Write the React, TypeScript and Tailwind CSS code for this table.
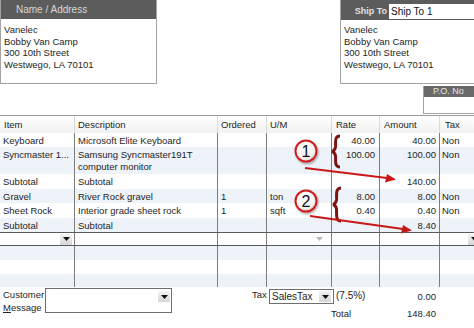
import React from "react";

type Line = {
  item: string;
  desc: string[];
  ord: string;
  um: string;
  rate: string;
  amt: string;
  tax: string;
  h: string;
  bg: string;
};

const lines: Line[] = [
  { item: "Keyboard", desc: ["Microsoft Elite Keyboard"], ord: "", um: "", rate: "40.00", amt: "40.00", tax: "Non", h: "h-[14px]", bg: "bg-white" },
  { item: "Syncmaster 1...", desc: ["Samsung Syncmaster191T", "computer monitor"], ord: "", um: "", rate: "100.00", amt: "100.00", tax: "Non", h: "h-[27px]", bg: "bg-[#eef2f9]" },
  { item: "Subtotal", desc: ["Subtotal"], ord: "", um: "", rate: "", amt: "140.00", tax: "", h: "h-[15px]", bg: "bg-white" },
  { item: "Gravel", desc: ["River Rock gravel"], ord: "1", um: "ton", rate: "8.00", amt: "8.00", tax: "Non", h: "h-[14px]", bg: "bg-[#eef2f9]" },
  { item: "Sheet Rock", desc: ["Interior grade sheet rock"], ord: "1", um: "sqft", rate: "0.40", amt: "0.40", tax: "Non", h: "h-[15px]", bg: "bg-white" },
  { item: "Subtotal", desc: ["Subtotal"], ord: "", um: "", rate: "", amt: "8.40", tax: "", h: "h-[14px]", bg: "bg-[#eef2f9]" },
];

const blanks = [
  { h: "h-[14px]", bg: "bg-[#eef2f9]" },
  { h: "h-[14px]", bg: "bg-white" },
  { h: "h-[13px]", bg: "bg-[#eef2f9]" },
];

const grid = "grid grid-cols-[74px_143px_49px_65px_48px_60px_35px]";
const cell = "border-l border-[#7d7d7d]";

const DropArrow: React.FC<{ light?: boolean }> = ({ light }) => (
  <div
    className={
      light
        ? "w-[12px] h-[10px] flex items-center justify-center"
        : "w-[12px] h-[11px] flex items-center justify-center bg-gradient-to-b from-[#f4f4f4] to-[#d6d6d6]"
    }
  >
    <svg width="7" height="4" viewBox="0 0 7 4">
      <path d="M0 0 L7 0 L3.5 4 Z" fill={light ? "#b8b8b8" : "#111"} />
    </svg>
  </div>
);

const Callouts: React.FC = () => (
  <svg
    className="absolute left-0 top-0 pointer-events-none"
    width="474"
    height="328"
    viewBox="0 0 474 328"
  >
    <defs>
      <radialGradient id="disc" cx="40%" cy="35%" r="70%">
        <stop offset="0%" stopColor="#ffffff" />
        <stop offset="70%" stopColor="#f3f3f3" />
        <stop offset="100%" stopColor="#cfcfcf" />
      </radialGradient>
      <filter id="sh" x="-40%" y="-40%" width="180%" height="180%">
        <feDropShadow dx="1" dy="1.5" stdDeviation="1.2" floodColor="#000" floodOpacity="0.35" />
      </filter>
    </defs>

    {/* braces */}
    <path
      d="M340 136 C334 136 336 143 335.5 147 C335 150 334 151 332 151.5 C334 152 335 153 335.5 156 C336 160 334 167 340 167"
      fill="none"
      stroke="#7d1414"
      strokeWidth="3"
    />
    <path
      d="M341 188 C335 188 337 196 336.5 200 C336 203 335 204 333 204.5 C335 205 336 206 336.5 209 C337 214 335 221 341 221"
      fill="none"
      stroke="#7d1414"
      strokeWidth="3"
    />

    {/* arrows */}
    <line x1="305" y1="168" x2="387" y2="178" stroke="#c81818" strokeWidth="2" />
    <path d="M396 179.5 L385 182.5 L387 174 Z" fill="#c81818" />
    <line x1="310" y1="216" x2="403" y2="229" stroke="#c81818" strokeWidth="2" />
    <path d="M412 230.5 L401 233.5 L403 225 Z" fill="#c81818" />

    {/* numbered discs */}
    <g filter="url(#sh)">
      <circle cx="306" cy="151" r="10.5" fill="url(#disc)" stroke="#d01f1f" strokeWidth="2" />
      <circle cx="306" cy="201" r="10.5" fill="url(#disc)" stroke="#d01f1f" strokeWidth="2" />
    </g>
    <text x="306" y="157" textAnchor="middle" fontFamily="Liberation Sans, Arial, sans-serif" fontSize="16" fill="#111">
      1
    </text>
    <text x="306" y="207" textAnchor="middle" fontFamily="Liberation Sans, Arial, sans-serif" fontSize="16" fill="#111">
      2
    </text>
  </svg>
);

export default function App() {
  return (
    <div className="relative w-[474px] h-[328px] overflow-hidden bg-white font-['Liberation_Sans',Arial,sans-serif] text-[9.5px] text-[#1e1e1e]">
      {/* Address blocks */}
      <div className="flex h-[115px]">
        <div className="w-[157px] h-[84px] border border-[#a3a3a3] border-t-0 flex flex-col">
          <div className="h-[19px] bg-[#5c5c5c] text-[#d8d8d8] text-[10px] pl-[15px] leading-[19px]">
            Name / Address
          </div>
          <div className="pl-[3px] pt-[5px] leading-[11.5px]">
            <div>Vanelec</div>
            <div>Bobby Van Camp</div>
            <div>300 10th Street</div>
            <div>Westwego, LA 70101</div>
          </div>
        </div>

        <div className="flex-1" />

        <div className="w-[134px] flex flex-col">
          <div className="h-[84px] border-l border-b border-[#a3a3a3] flex flex-col">
            <div className="h-[20px] bg-[#5c5c5c] pt-[4px] pb-[1px] flex items-stretch">
              <div className="w-[48px] text-right pr-[2px] text-[#e2e2e2] font-bold text-[9px] leading-[15px]">
                Ship To
              </div>
              <div className="flex-1 bg-white pl-[2px] text-[10px] leading-[15px] text-[#111]">
                Ship To 1
              </div>
            </div>
            <div className="pl-[3px] pt-[4px] leading-[11.5px]">
              <div>Vanelec</div>
              <div>Bobby Van Camp</div>
              <div>300 10th Street</div>
              <div>Westwego, LA 70101</div>
            </div>
          </div>
          <div className="self-end w-[51px] mt-[2px] border-l border-b border-[#a3a3a3]">
            <div className="h-[11px] bg-[#6a6a6a] text-[#e6e6e6] text-[9px] leading-[11px] pl-[9px]">
              P.O. No
            </div>
            <div className="h-[16px] bg-white" />
          </div>
        </div>
      </div>

      {/* Item table */}
      <div className="border-t border-[#9c9c9c]">
        <div className={`${grid} h-[17px] bg-gradient-to-b from-white to-[#f1f1f1] leading-[17px]`}>
          <div className="pl-[4px]">Item</div>
          <div className="border-l border-[#dadada] pl-[3px]">Description</div>
          <div className="border-l border-[#dadada] pl-[3px]">Ordered</div>
          <div className="border-l border-[#dadada] pl-[3px]">U/M</div>
          <div className="border-l border-[#dadada] pl-[4px]">Rate</div>
          <div className="border-l border-[#dadada] pl-[4px]">Amount</div>
          <div className="border-l border-[#dadada] pl-[5px]">Tax</div>
        </div>

        {lines.map((r, i) => (
          <div key={i} className={`${grid} ${r.h} ${r.bg} leading-[12px]`}>
            <div className="pl-[3px] pt-[2px]">{r.item}</div>
            <div className={`${cell} pl-[3px] pt-[2px]`}>
              {r.desc.map((d) => (
                <div key={d}>{d}</div>
              ))}
            </div>
            <div className={`${cell} pl-[3px] pt-[2px]`}>{r.ord}</div>
            <div className={`${cell} pl-[3px] pt-[2px]`}>{r.um}</div>
            <div className={`${cell} text-right pr-[4px] pt-[2px]`}>{r.rate}</div>
            <div className={`${cell} text-right pr-[3px] pt-[2px]`}>{r.amt}</div>
            <div className={`${cell} pl-[2px] pt-[2px]`}>{r.tax}</div>
          </div>
        ))}

        {/* edit row */}
        <div className={`${grid} h-[14px] bg-white border-y border-[#5a5a5a]`}>
          <div className="flex items-center justify-end pr-[2px]">
            <DropArrow />
          </div>
          <div className={cell} />
          <div className={cell} />
          <div className={`${cell} flex items-center justify-end pr-[6px]`}>
            <DropArrow light />
          </div>
          <div className={cell} />
          <div className={cell} />
          <div className={`${cell} flex items-center justify-end pr-0 overflow-hidden`}>
            <div className="-mr-[6px]">
              <DropArrow />
            </div>
          </div>
        </div>

        {blanks.map((b, i) => (
          <div key={i} className={`${grid} ${b.h} ${b.bg}`}>
            <div />
            <div className={cell} />
            <div className={cell} />
            <div className={cell} />
            <div className={cell} />
            <div className={cell} />
            <div className={cell} />
          </div>
        ))}
      </div>

      {/* Footer */}
      <div className="flex pt-[1px]">
        <div className="w-[45px] pl-[3px] pt-[1px] leading-[12.5px]">
          <div>Customer</div>
          <div>
            <span className="underline">M</span>essage
          </div>
        </div>
        <div className="w-[127px] h-[25px] border border-[#6e6e6e] bg-white flex justify-end pt-[2px] pr-[1px]">
          <DropArrow />
        </div>

        <div className="flex flex-col">
          <div className="flex items-start h-[17px]">
            <div className="w-[80px]" />
            <div className="w-[17px] leading-[12px] pt-[1px]">Tax</div>
            <div className="w-[65px] h-[15px] border border-[#6e6e6e] bg-white flex items-center justify-between pl-[2px] pr-[2px] mt-[1px]">
              <span className="text-[10px] leading-[13px]">SalesTax</span>
              <DropArrow />
            </div>
            <div className="w-[40px] pl-[2px] pt-[2px] leading-[12px] text-[10px]">(7.5%)</div>
            <div className="w-[62px] text-right pt-[3px] leading-[12px]">0.00</div>
          </div>
          <div className="flex items-start h-[16px]">
            <div className="w-[159px]" />
            <div className="w-[24px] pt-[3px] leading-[12px]">Total</div>
            <div className="w-[81px] text-right pt-[3px] leading-[12px]">148.40</div>
          </div>
        </div>
      </div>

      <Callouts />
    </div>
  );
}
